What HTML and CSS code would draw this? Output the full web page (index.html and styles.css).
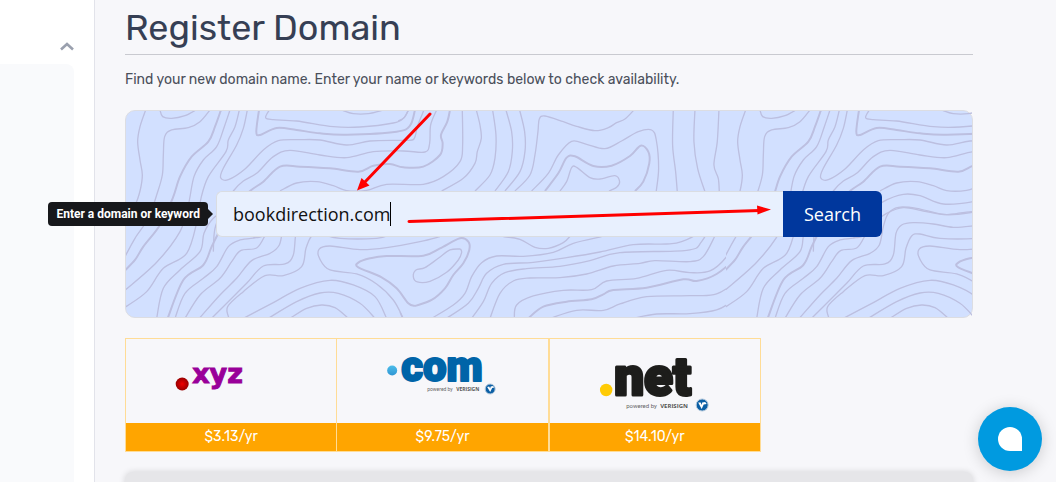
FILE: index.html
```html
<!DOCTYPE html>
<html lang="en">
<head>
    <meta charset="UTF-8">
    <meta name="viewport" content="width=device-width, initial-scale=1.0">
    <title>Register Domain</title>
    <link rel="stylesheet" href="styles.css">
</head>
<body>

<div class="layout">
    <aside class="sidebar">
        <button class="collapse-btn" type="button" aria-label="Collapse">
            <svg width="14" height="9" viewBox="0 0 14 9"><path d="M1 7.500 7 2l6 5.500" fill="none" stroke="#9aa0ae" stroke-width="2.600"/></svg>
        </button>
        <div class="sidebar-panel"></div>
    </aside>

    <main class="content">
        <h1>Register Domain</h1>
        <p class="intro">Find your new domain name. Enter your name or keywords below to check availability.</p>

        <section class="search-box">
            <svg class="contours" aria-hidden="true">
                <defs>
                    <pattern id="topo" width="600" height="210" patternUnits="userSpaceOnUse">
                        <g id="lines" transform="translate(-6 -6) scale(.3333)"></g>
                    </pattern>
                </defs>
                <rect width="100%" height="100%" fill="url(#topo)"/>
            </svg>
            <form class="search-form" onsubmit="return false">
                <label class="tooltip" for="domain">Enter a domain or keyword</label>
                <input type="text" id="domain" value="bookdirection.com" autocomplete="off">
                <span class="caret"></span>
                <button type="submit" class="search-btn">Search</button>
            </form>
            <svg class="arrows" width="420" height="120" viewBox="355 110 420 120" aria-hidden="true">
                <g stroke="#f00" stroke-width="3" stroke-linecap="round" fill="#f00">
                    <path d="M430 114 364 183M409 221.500 760 210.500"/>
                    <path d="M357 190.500 361.500 178 369.500 185.500ZM771 209.500 757 205.500 757.500 214.500Z" stroke="none"/>
                </g>
            </svg>
        </section>

        <div class="tlds">
            <div class="tld">
                <svg class="tld-logo" viewBox="0 0 210 84" role="img" aria-label=".xyz">
                    <defs>
                        <radialGradient id="red"><stop offset="0" stop-color="#f00000"/><stop offset="1" stop-color="#980000"/></radialGradient>
                    </defs>
                    <circle cx="56" cy="45" r="6.500" fill="url(#red)"/>
                    <text class="logo-xyz" x="66" y="44">xyz</text>
                </svg>
                <div class="price">$3.13/yr</div>
            </div>
            <div class="tld">
                <svg class="tld-logo" viewBox="0 0 210 84" role="img" aria-label=".com">
                    <defs>
                        <linearGradient id="blue" x2="0" y2="1"><stop offset="0" stop-color="#4cbdea"/><stop offset="1" stop-color="#2f95d3"/></linearGradient>
                    </defs>
                    <circle cx="55" cy="31.500" r="5" fill="url(#blue)"/>
                    <text class="logo-com" x="64" y="42">com</text>
                    <text class="powered" x="90" y="52">powered by</text>
                    <text class="verisign" x="119" y="52">VERISIGN</text>
                    <circle cx="153" cy="50" r="5" fill="#0b5fa5" stroke="#b5c9dc"/>
                    <path d="m150 48 3 5 2-4 2-.5-1-1.500-2.500.5-.5 2-1-2z" fill="#fff"/>
                </svg>
                <div class="price">$9.75/yr</div>
            </div>
            <div class="tld">
                <svg class="tld-logo" viewBox="0 0 210 84" role="img" aria-label=".net">
                    <circle cx="56" cy="51" r="6.200" fill="#ffcb05"/>
                    <text class="logo-net" x="64" y="56">net</text>
                    <text class="powered powered-lg" x="76" y="69">powered by</text>
                    <text class="verisign verisign-lg" x="110" y="69">VERISIGN</text>
                    <circle cx="152" cy="66" r="6" fill="#0b5fa5" stroke="#b5c9dc"/>
                    <path d="m148 63.500 3.500 6.500 2-4.500 3-.5-1.500-2-3 .5-.5 2.500-1-2.500z" fill="#fff"/>
                </svg>
                <div class="price">$14.10/yr</div>
            </div>
        </div>

        <div class="next-card"></div>
    </main>
</div>

<button class="chat-btn" type="button" aria-label="Open chat">
    <svg width="24" height="24" viewBox="0 0 24 24"><path d="M12 0a12 12 0 0 1 12 12v12H12a12 12 0 0 1 0-24z" fill="#fff"/></svg>
</button>

<script src="contours.js"></script>
</body>
</html>
```
FILE: styles.css
```css
* { margin: 0; padding: 0; box-sizing: border-box; }
body {
    font-family: Rubik, Roboto, sans-serif;
    background: #f7f7fa;
    color: #4a4f5a;
}
.layout { display: flex; height: 100vh; overflow: hidden; }
.sidebar {
    flex: 0 0 95px;
    display: flex;
    flex-direction: column;
    background: #fff;
    border-right: 1px solid #e2e3ea;
    padding-right: 20px;
}
.collapse-btn {
    height: 64px;
    padding-top: 28px;
    background: none;
    border: none;
    text-align: right;
    cursor: pointer;
}
.sidebar-panel { flex: 1; background: #f9fafc; border-radius: 0 8px 0 0; }
.content { flex: 1; padding: 6px 83px 0 30px; }
h1 {
    font-size: 36px;
    line-height: 44px;
    font-weight: 400;
    color: #363f54;
    padding-bottom: 4px;
    border-bottom: 1px solid #c9cad0;
}
.intro { font-size: 14px; line-height: 20px; margin: 15px 0 20px; }

.search-box {
    position: relative;
    padding: 80px 90px;
    background: #d2e0ff;
    border: 1px solid #dcdde2;
    border-radius: 10px;
}
.contours { position: absolute; left: 0; top: 0; width: 100%; height: 100%; }
.contours path { fill: none; stroke: #bcbfe0; stroke-width: 4; }
.contours .bold { stroke-width: 6; }
.search-form { position: relative; display: flex; height: 46px; }
.search-form input {
    flex: 1;
    min-width: 0;
    padding: 0 16px;
    background: #e8f0fe;
    border: 1px solid #dadde2;
    border-right: none;
    border-radius: 6px 0 0 6px;
    font: 18px "Open Sans", sans-serif;
    color: #111;
    outline: none;
}
.caret { position: absolute; left: 174px; top: 11px; width: 1px; height: 24px; background: #000; }
.search-btn {
    width: 99px;
    background: #00379d;
    border: none;
    border-radius: 0 6px 6px 0;
    color: #fff;
    font: 18px "Open Sans", sans-serif;
    cursor: pointer;
}
.tooltip {
    position: absolute;
    right: calc(100% + 8px);
    top: 11px;
    padding: 0 8px;
    background: #17181b;
    border-radius: 4px;
    color: #fff;
    font: bold 12px/24px Roboto, Arial, sans-serif;
    white-space: nowrap;
}
.tooltip::after {
    content: "";
    position: absolute;
    left: 100%;
    top: 7px;
    border: 5px solid transparent;
    border-left-color: #17181b;
    border-right: none;
}
.arrows { position: absolute; left: 229px; top: -1px; pointer-events: none; }

.tlds { display: flex; width: 75%; margin-top: 20px; }
.tld { flex: 1; border: 1px solid #ffdc96; }
.tld:nth-child(2) { border-left: none; }
.tld-logo { display: block; width: 100%; height: 84px; }
.price {
    background: #ffa500;
    color: #fff;
    font-size: 14px;
    line-height: 28px;
    text-align: center;
}
.logo-xyz { font: bold 27px "DejaVu Sans", sans-serif; fill: #990099; stroke: #990099; }
.logo-com { font: 900 42px Roboto, sans-serif; fill: #0064a8; stroke: #0064a8; stroke-width: 2; stroke-linejoin: round; }
.logo-net { font: 900 53px Roboto, sans-serif; fill: #1d1d1b; stroke: #1d1d1b; stroke-width: 3; stroke-linejoin: round; }
.powered { font: 5px Roboto, sans-serif; fill: #666; }
.powered-lg { font-size: 6px; }
.verisign { font: bold 5px "Open Sans", sans-serif; fill: #555; }
.verisign-lg { font-size: 6px; }

.next-card {
    height: 120px;
    margin-top: 20px;
    background: #e6e6e9;
    border-radius: 8px;
    box-shadow: 0 0 6px rgba(0, 0, 0, 0.15);
}
.chat-btn {
    position: fixed;
    right: 14px;
    bottom: 11px;
    width: 64px;
    height: 64px;
    display: flex;
    align-items: center;
    justify-content: center;
    background: #009ae0;
    border: none;
    border-radius: 50%;
    box-shadow: 0 2px 16px rgba(0, 0, 0, 0.18);
    cursor: pointer;
}
```
FILE: contours.js
```javascript
// each group: x offset, y offset, then lines as point lists ("b" = bold line)
const groups = [
    [0, 0, [
        "77,15 60,65 53,110 60,165 67,210 60,258 45,300 10,350",
        "120,15 128,35 155,40 195,32 228,15",
        "270,15 240,50 205,68 155,75 134,95 130,150 127,210 110,270 85,340 45,400 15,455",
        "b 303,15 285,65 265,110 215,155 180,215 158,280 120,360 70,425 45,465 15,496",
        "330,15 313,65 290,125 250,165 222,215 205,300 180,380 110,472 15,556",
        "358,15 345,65 325,105 318,140 265,215 243,280 232,345 200,445 130,490 80,560 15,607",
        "382,15 370,70 350,120 310,190 302,218 325,224 375,192 430,135 475,107 540,104 600,105 680,120 750,108 840,106 877,105 886,92 893,62 912,15",
        "b 417,15 409,80 420,90 470,69 530,75 600,85 680,89 830,80 870,62 885,15",
        "448,15 437,38 460,44 530,48 640,65 720,66 820,54 850,40 866,15",
        "665,15 700,26 745,26 790,15",
        "280,440 285,370 310,310 340,258 370,228 410,205 460,155 510,136 600,150 680,158 760,140 850,138 915,141 929,115 932,60 950,15",
        "b 143,640 190,525 250,480 275,425 300,375 335,310 390,258 430,230 480,185 540,185 630,190 715,200 760,182 810,177 850,187 910,185 960,150 968,115 963,90 982,50 990,15",
        "480,258 530,234 590,230 640,242 680,257 740,256 800,238 910,238 970,215 1020,170 1028,120 1027,15",
        "440,330 490,290 550,268 600,272 670,297 760,290 830,270",
        "400,400 450,360 500,325 550,308 610,318 680,329 760,320 850,335"
    ]],
    [840, 0, [
        "-5,48 13,38 25,15",
        "125,258 190,220 225,175 232,140 244,100 240,60 229,15",
        "225,258 270,210 285,160 288,90 278,15",
        "285,258 325,200 337,140 335,80 318,15",
        "315,258 360,200 375,140 374,80 359,15",
        "345,258 390,210 405,150 414,80 418,42 435,33 490,50 530,64 585,77 625,68 650,53 675,42 702,15",
        "395,258 445,205 475,150 515,109 560,118 615,131 665,108 715,80 755,75 769,105 776,190 769,258",
        "b 435,258 475,205 500,158 525,154 580,183 635,182 690,153 722,122 745,140 748,175 730,230 705,258",
        "480,258 500,230 515,188 530,187 570,218 600,222 645,212 659,230 650,247 627,258",
        "820,15 818,120 827,200 832,260"
    ]],
    [1710, 0, [
        "15,15 12,110 23,190 45,260",
        "87,15 82,110 72,180 85,220 88,260",
        "165,15 142,90 155,170 156,220"
    ]],
    [0, 315, [
        "110,325 130,235 180,180 240,125 252,70 280,25 320,0",
        "165,325 195,250 250,205 290,170 325,110 360,90 410,83 432,77 460,55",
        "195,325 240,255 300,205 335,155 362,122 410,114 435,77",
        "238,325 300,255 350,205 395,152 450,130 478,105 490,50 505,10 535,-8 590,-5 680,14 770,5",
        "275,325 330,270 380,220 430,168 495,162 520,135 528,70 545,45 580,38 640,42 700,52 765,47",
        "327,325 323,290 370,245 435,197 490,197 545,170 558,115 575,78 600,72 660,85 770,85 810,75",
        "370,325 460,278 540,235 630,211 700,225 765,260 800,325",
        "445,325 530,275 600,249 655,250 720,280 765,325",
        "510,325 560,295 605,285 645,293 685,325",
        "850,325 820,270 770,222 710,192 630,180 600,148 597,118 630,108 720,119 800,113 900,95 960,80",
        "b 885,288 865,280 830,235 785,202 715,172 715,158 750,145 800,138 910,137 960,115 1020,85 1045,95 1048,120 1030,160 1000,195 975,235 935,270 885,288"
    ]],
    [840, 315, [
        "182,117 150,120 115,145 75,173 48,180 40,200 52,216 90,214 140,187 175,150 185,128 182,117",
        "0,307 8,325",
        "95,325 160,285 195,250 215,200 245,158 290,138 370,139 460,127 520,100 605,80",
        "140,325 205,280 235,235 260,190 310,163 400,157 500,143 600,126 700,104 800,102 845,95 900,65 930,20",
        "215,325 250,275 275,220 315,188 380,176 480,169 570,152 660,128 860,121 905,95 945,20",
        "270,325 300,250 340,213 390,204 480,203 560,192 640,168 720,160 765,152 870,155 910,140 945,78",
        "343,325 350,285 400,258 490,241 575,239 620,213 710,205 800,181 870,188 930,183 980,140 1012,78",
        "b 385,325 430,290 500,275 575,268 610,253 640,240 740,233 850,208 890,213 950,192 1010,140 1055,78",
        "450,325 530,301 610,301 660,282 740,260 870,257 950,252 1020,205 1080,145",
        "700,325 770,312 870,311 950,300 1000,270 1060,210",
        "310,80 360,88 405,112 445,115 490,98 512,77"
    ]]
];

function smooth(pts, dx, dy) {
    const p = pts.map(([x, y]) => [x + dx, y + dy]);
    let d = `M${p[0]}`;
    for (let i = 0; i < p.length - 1; i++) {
        const a = p[i - 1] || p[i], b = p[i], c = p[i + 1], e = p[i + 2] || c;
        d += `C${b[0] + (c[0] - a[0]) / 6},${b[1] + (c[1] - a[1]) / 6} ${c[0] - (e[0] - b[0]) / 6},${c[1] - (e[1] - b[1]) / 6} ${c}`;
    }
    return d;
}

const target = document.getElementById("lines");
groups.forEach(([dx, dy, lines]) => {
    lines.forEach((line) => {
        const bold = line.startsWith("b ");
        const pts = line.replace("b ", "").split(" ").map((s) => s.split(",").map(Number));
        const path = document.createElementNS("http://www.w3.org/2000/svg", "path");
        path.setAttribute("d", smooth(pts, dx, dy));
        if (bold) path.setAttribute("class", "bold");
        target.appendChild(path);
    });
});
```
